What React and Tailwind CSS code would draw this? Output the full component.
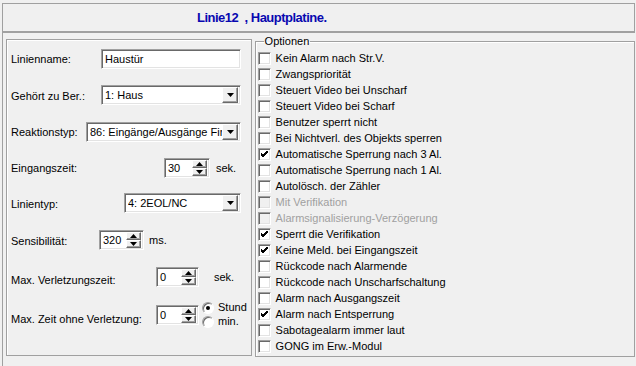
import React from 'react'

const sunken = 'bg-white border border-t-[#a0a0a0] border-l-[#a0a0a0] border-b-white border-r-white shadow-[inset_1px_1px_0_#696969,inset_-1px_-1px_0_#e3e3e3]'
const raised = 'bg-[#f0f0f0] border border-t-white border-l-white border-b-[#696969] border-r-[#696969] shadow-[inset_-1px_-1px_0_#a0a0a0]'

const options = [
  { label: 'Kein Alarm nach Str.V.' },
  { label: 'Zwangspriorität' },
  { label: 'Steuert Video bei Unscharf' },
  { label: 'Steuert Video bei Scharf' },
  { label: 'Benutzer sperrt nicht' },
  { label: 'Bei Nichtverl. des Objekts sperren' },
  { label: 'Automatische Sperrung nach 3 Al.', checked: true },
  { label: 'Automatische Sperrung nach 1 Al.' },
  { label: 'Autolösch. der Zähler' },
  { label: 'Mit Verifikation', disabled: true },
  { label: 'Alarmsignalisierung-Verzögerung', disabled: true },
  { label: 'Sperrt die Verifikation', checked: true },
  { label: 'Keine Meld. bei Eingangszeit', checked: true },
  { label: 'Rückcode nach Alarmende' },
  { label: 'Rückcode nach Unscharfschaltung' },
  { label: 'Alarm nach Ausgangszeit' },
  { label: 'Alarm nach Entsperrung', checked: true },
  { label: 'Sabotagealarm immer laut' },
  { label: 'GONG im Erw.-Modul' },
]

function Arrow({ up }) {
  return (
    <svg width="7" height="4" viewBox="0 0 7 4" className="block">
      {up ? <path d="M3.5 0 L7 4 L0 4 Z" fill="#000" /> : <path d="M0 0 L7 0 L3.5 4 Z" fill="#000" />}
    </svg>
  )
}

function Select({ value, width }) {
  return (
    <div className={`${sunken} h-[20px] flex items-center pl-[3px] pr-[2px]`} style={{ width }}>
      <span className="flex-1 overflow-hidden whitespace-nowrap">{value}</span>
      <div className={`${raised} w-[16px] h-[16px] shrink-0 flex items-center justify-center`}>
        <Arrow />
      </div>
    </div>
  )
}

function Spinner({ value, width }) {
  return (
    <div className={`${sunken} h-[20px] flex items-center pl-[3px] pr-[2px]`} style={{ width }}>
      <span className="flex-1">{value}</span>
      <div className="flex flex-col w-[15px] h-[16px]">
        <div className={`${raised} flex-1 flex items-center justify-center`}><Arrow up /></div>
        <div className={`${raised} flex-1 flex items-center justify-center`}><Arrow /></div>
      </div>
    </div>
  )
}

function Checkbox({ checked, disabled }) {
  return (
    <div className={`w-[13px] h-[13px] shrink-0 flex items-center justify-center border border-t-[#a0a0a0] border-l-[#a0a0a0] border-b-white border-r-white shadow-[inset_1px_1px_0_#696969,inset_-1px_-1px_0_#e3e3e3] ${disabled ? 'bg-[#f0f0f0]' : 'bg-white'}`}>
      {checked && (
        <svg width="7" height="7" viewBox="0 0 7 7">
          <path d="M0 2 L2 4 L7 -1 M0 3 L2 5 L7 0 M0 4 L2 6 L7 1" stroke="#000" strokeWidth="1" fill="none" />
        </svg>
      )}
    </div>
  )
}

function Radio({ checked }) {
  return (
    <div className="w-[12px] h-[12px] rounded-full bg-white border border-t-[#a0a0a0] border-l-[#a0a0a0] border-b-white border-r-white shadow-[inset_1px_1px_0_#696969] flex items-center justify-center">
      {checked && <div className="w-[4px] h-[4px] rounded-full bg-black" />}
    </div>
  )
}

export default function App() {
  return (
    <div className="w-[636px] h-[366px] bg-[#f0f0f0] pt-[3px] pl-[2px] overflow-hidden text-[11px] text-black font-['Liberation_Sans',Arial,sans-serif] leading-none">
      <div className="w-[633px] h-[363px] border-l border-[#a0a0a0] flex flex-col">
        {/* Title */}
        <div className="h-[30px] shrink-0 border-t border-r border-b-2 border-[#a0a0a0] flex items-center pl-[194px]">
          <span className="text-[13px] font-bold tracking-[-0.5px] text-[#0808b0]">Linie12&nbsp;&nbsp;, Hauptplatine.</span>
        </div>

        <div className="flex items-start pl-[3px] pt-[2px]">
          {/* Left panel */}
          <div className="mt-[4px] w-[246px] h-[317px] border border-[#a0a0a0] shadow-[inset_1px_1px_0_#fff] flex flex-col pl-[4px] pt-[9px]">
            <div className="h-[20px] flex items-center">
              <span className="w-[90px]">Linienname:</span>
              <div className={`${sunken} w-[140px] h-[20px] flex items-center pl-[3px]`}>Haustür</div>
            </div>
            <div className="h-[20px] flex items-center mt-[16px]">
              <span className="w-[90px] pt-[2px]">Gehört zu Ber.:</span>
              <Select value="1: Haus" width={140} />
            </div>
            <div className="h-[20px] flex items-center mt-[17px]">
              <span className="w-[75px]">Reaktionstyp:</span>
              <Select value="86: Eingänge/Ausgänge Fir" width={155} />
            </div>
            <div className="h-[20px] flex items-center mt-[16px]">
              <span className="w-[153px]">Eingangszeit:</span>
              <Spinner value="30" width={46} />
              <span className="ml-[6px]">sek.</span>
            </div>
            <div className="h-[20px] flex items-center mt-[15px]">
              <span className="w-[113px] pt-[2px]">Linientyp:</span>
              <Select value="4: 2EOL/NC" width={117} />
            </div>
            <div className="h-[20px] flex items-center mt-[17px]">
              <span className="w-[88px] pt-[2px]">Sensibilität:</span>
              <Spinner value="320" width={45} />
              <span className="ml-[5px]">ms.</span>
            </div>
            <div className="h-[20px] flex items-center mt-[17px]">
              <span className="w-[145px] pt-[6px]">Max. Verletzungszeit:</span>
              <Spinner value="0" width={43} />
              <span className="ml-[15px]">sek.</span>
            </div>
            <div className="h-[20px] flex items-center mt-[18px]">
              <span className="w-[145px] pt-[8px]">Max. Zeit ohne Verletzung:</span>
              <Spinner value="0" width={43} />
              <div className="ml-[3px] flex flex-col gap-[2px] -mt-[1px]">
                <div className="flex items-center gap-[4px]"><Radio checked /><span>Stund</span></div>
                <div className="flex items-center gap-[4px]"><Radio /><span>min.</span></div>
              </div>
            </div>
          </div>

          {/* Options group */}
          <fieldset className="ml-[3px] w-[381px] h-[322px] border border-[#a0a0a0] shadow-[inset_1px_1px_0_#fff] pl-[2px] pt-[3px]">
            <legend className="ml-[6px] px-[1px] leading-[12px]">Optionen</legend>
            <div className="flex flex-col">
              {options.map(o => (
                <div key={o.label} className="h-[16px] flex items-center gap-[5px]">
                  <Checkbox checked={o.checked} disabled={o.disabled} />
                  <span className={o.disabled ? 'text-[#a0a0a0]' : ''}>{o.label}</span>
                </div>
              ))}
            </div>
          </fieldset>
        </div>
      </div>
    </div>
  )
}
